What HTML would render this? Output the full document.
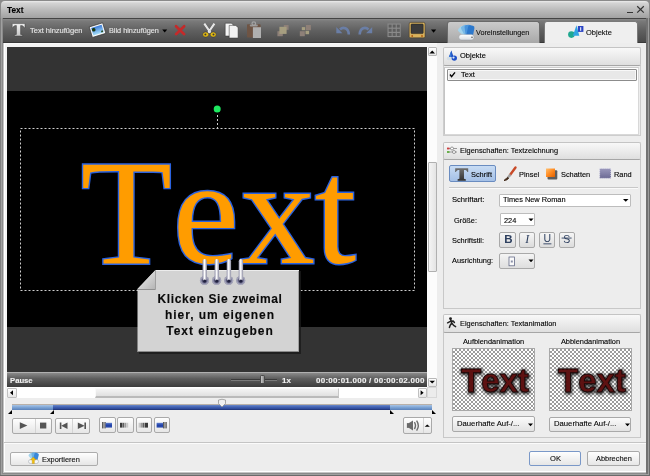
<!DOCTYPE html>
<html><head><meta charset="utf-8">
<style>
*{margin:0;padding:0;box-sizing:border-box}
html,body{width:650px;height:476px;overflow:hidden;background:#6e6e6e}
body{position:relative;font-family:"Liberation Sans",sans-serif;font-size:11px;color:#000}
div,span,svg{position:absolute}
.t{white-space:nowrap;line-height:1;-webkit-text-stroke:0.12px currentColor;will-change:transform}
.ph{background:linear-gradient(#f8f8f8,#dfdfdf);border:1px solid #c4c4c4;border-bottom-color:#a6a6a6;border-radius:2px}
.btn{background:linear-gradient(#fefefe,#e6e6e6);border:1px solid #a9a9a9;border-radius:2px}
.tbl{color:#e6e6e6;font-size:11px}
</style></head><body>
<!-- window frame -->
<div style="left:0;top:0;width:650px;height:476px;background:#8a8a8a"></div>
<div style="left:0;top:18px;width:650px;height:458px;background:#6a6a6a"></div>
<div style="left:0;top:18px;width:1px;height:457px;background:#7e7e7e"></div>
<div style="left:1px;top:18px;width:648px;height:457px;background:#a0a0a0"></div>
<div style="left:2px;top:18px;width:646px;height:456px;background:#8a8a8a"></div>
<div style="left:3px;top:18px;width:643px;height:455px;background:#c4c4c4"></div>
<div style="left:646px;top:18px;width:2px;height:456px;background:#727272"></div>
<div style="left:648px;top:18px;width:1px;height:456px;background:#9c9c9c"></div>
<!-- title bar -->
<div style="left:1px;top:1px;width:648px;height:17px;background:linear-gradient(#ececec,#d4d4d4 2px,#bcbcbc 50%,#a2a2a2);border-radius:4px 4px 0 0"></div>
<div class="t" style="left:7px;top:6px;font-weight:bold;font-size:8.3px">Text</div>
<!-- toolbar -->
<div style="left:3px;top:18px;width:643px;height:25px;background:linear-gradient(#8a8a8a,#7a7a7a 2px,#606060 50%,#4a4a4a);border-top:1px solid #444;border-bottom:1px solid #383838"></div>

<!-- toolbar content -->
<svg style="left:0;top:0" width="650" height="44">
<defs>
<linearGradient id="silv" x1="0" y1="0" x2="0" y2="1"><stop offset="0" stop-color="#f4f4f4"/><stop offset="1" stop-color="#c4c4c4"/></linearGradient>
<linearGradient id="sky" x1="0" y1="0" x2="0" y2="1"><stop offset="0" stop-color="#3a7ad8"/><stop offset="1" stop-color="#a8e0f8"/></linearGradient>
</defs>
<!-- T icon -->
<path d="M12.2,23.6 L25,23.6 L25,27.8 L24,27.8 C23.6,26 22.6,25.6 20.6,25.6 L20.6,34.4 L22.6,34.9 L22.6,36 L14.4,36 L14.4,34.9 L16.4,34.4 L16.4,25.6 C14.4,25.6 13.4,26 13,27.8 L12.2,27.8 Z" fill="url(#silv)" stroke="#3a3a3a" stroke-width="0.5"/>
<!-- photo icon -->
<g transform="rotate(-17 98 30)"><rect x="90.5" y="24.5" width="14" height="11" fill="#fafafa" stroke="#2a2a2a" stroke-width="0.6"/><rect x="92" y="26" width="11" height="8" fill="url(#sky)"/><circle cx="94" cy="28.5" r="1.8" fill="#1a3a10"/><circle cx="101.5" cy="32.5" r="1" fill="#2a4a20"/></g>
<!-- dropdown arrows -->
<path d="M162.2,29.6 L167.2,29.6 L164.7,32.6 Z" fill="#000"/>
<path d="M431,29.6 L436.2,29.6 L433.6,32.8 Z" fill="#000"/>
<!-- red X -->
<path d="M176,26.2 L184.2,34.2 M184.2,26.2 L176,34.2" stroke="#c42a2a" stroke-width="2.6" stroke-linecap="round"/>
<!-- scissors -->
<path d="M204.3,23.6 L210.6,32.8 M214.4,23.6 L208.1,32.8" stroke="#f4f4f4" stroke-width="1.9"/>
<path d="M204.3,23.6 L210.6,32.8 M214.4,23.6 L208.1,32.8" stroke="#909090" stroke-width="0.4" opacity="0.5"/>
<ellipse cx="205.7" cy="34.5" rx="3" ry="2.6" fill="#e4bc10" stroke="#2a2a40" stroke-width="0.5"/>
<ellipse cx="213.2" cy="34.5" rx="3" ry="2.6" fill="#e4bc10" stroke="#2a2a40" stroke-width="0.5"/>
<circle cx="205.4" cy="34.6" r="1" fill="#3a3a40"/><circle cx="213.5" cy="34.6" r="1" fill="#3a3a40"/>
<!-- copy -->
<path d="M225.2,23.2 L231.5,23.2 L233.7,25.4 L233.7,36 L225.2,36 Z" fill="#f6f6f6" stroke="#303030" stroke-width="0.5"/>
<path d="M229.2,25.4 L235.8,25.4 L238.1,27.7 L238.1,38 L229.2,38 Z" fill="#f2f2f2" stroke="#303030" stroke-width="0.5"/>
<!-- paste disabled -->
<rect x="247" y="24.3" width="13.6" height="13.3" rx="0.8" fill="#6e5444"/>
<rect x="249.8" y="24.6" width="8" height="2" rx="0.8" fill="#9a9a9a"/><circle cx="253.8" cy="23.6" r="1.8" fill="none" stroke="#a4a4a4" stroke-width="1.2"/>
<rect x="252.9" y="27.2" width="8.1" height="10.8" fill="#b0b0b0"/>
<!-- group -->
<rect x="283.8" y="25" width="4.8" height="4.8" fill="#8e8078"/>
<rect x="277.4" y="31.2" width="5.4" height="5" fill="#8e8078"/>
<rect x="279.4" y="26.8" width="7.2" height="7.1" fill="#a69e80"/>
<!-- ungroup -->
<rect x="305.9" y="25" width="5" height="5.2" fill="#8e8078"/>
<rect x="301.8" y="27.1" width="3.4" height="3.1" fill="#a69e80"/>
<rect x="299.8" y="31.2" width="5" height="5" fill="#8e8078"/>
<rect x="305.5" y="30.8" width="3.6" height="3.4" fill="#a69e80"/>
<!-- undo -->
<path d="M340,29.5 C343,26.5 348.5,27.5 348.8,34.5" fill="none" stroke="#6a7ea6" stroke-width="2.6"/>
<path d="M336.3,27 L336.3,33.3 L342.4,33.3 Z" fill="#6a7ea6"/>
<!-- redo -->
<path d="M368.5,29.5 C365.5,26.5 360,27.5 359.7,34.5" fill="none" stroke="#6a7ea6" stroke-width="2.6"/>
<path d="M372.2,27 L372.2,33.3 L366.1,33.3 Z" fill="#6a7ea6"/>
<!-- grid -->
<rect x="387.5" y="23.5" width="13.2" height="13.6" fill="#8a8a8a"/>
<g fill="#5e5e5e"><rect x="388.6" y="24.6" width="3" height="3"/><rect x="392.7" y="24.6" width="3" height="3"/><rect x="396.8" y="24.6" width="3" height="3"/>
<rect x="388.6" y="28.8" width="3" height="3"/><rect x="392.7" y="28.8" width="3" height="3"/><rect x="396.8" y="28.8" width="3" height="3"/>
<rect x="388.6" y="33" width="3" height="3"/><rect x="392.7" y="33" width="3" height="3"/><rect x="396.8" y="33" width="3" height="3"/></g>
<!-- TV -->
<rect x="409.2" y="22.4" width="15.8" height="15.4" rx="1.5" fill="#d9b25c" stroke="#3a3020" stroke-width="0.5"/>
<rect x="411" y="24" width="12.2" height="9.6" rx="0.8" fill="#3a3a3a" stroke="#1c1c1c" stroke-width="0.5"/>
<circle cx="412.2" cy="36" r="0.9" fill="#b05a10"/><circle cx="422" cy="36" r="0.9" fill="#b05a10"/>
</svg>
<div class="t tbl" style="left:30px;top:27px;font-size:7.5px">Text hinzufügen</div>
<div class="t tbl" style="left:108.5px;top:27px;font-size:7.3px">Bild hinzufügen</div>

<!-- title buttons -->
<div style="left:626.5px;top:11.5px;width:6.5px;height:1.5px;background:#333"></div>
<svg style="left:636px;top:5px" width="10" height="10"><path d="M1.2,1.2 L7.8,7.6 M7.8,1.2 L1.2,7.6" stroke="#333" stroke-width="1.2"/></svg>
<!-- tabs -->
<div style="left:447px;top:20.5px;width:93px;height:22px;background:linear-gradient(#cbcbcb,#a8a8a8);border:1px solid #6a6a6a;border-bottom:none;border-radius:3px 3px 0 0"></div>
<div style="left:544px;top:20.5px;width:93.5px;height:23.5px;background:#efefef;border:1px solid #7a7a7a;border-bottom:none;border-radius:3px 3px 0 0"></div>
<svg style="left:0;top:0" width="650" height="44">
<defs>
<linearGradient id="pill" x1="0" y1="0" x2="0" y2="1"><stop offset="0" stop-color="#ffffff"/><stop offset="1" stop-color="#d8dde2"/></linearGradient>
</defs>
<g transform="translate(467.5,37.5)">
<rect x="-1.5" y="-12.5" width="6.5" height="12.5" rx="2" fill="#a4d4ec" transform="rotate(-48)"/>
<rect x="-1.5" y="-12.5" width="6.5" height="12.5" rx="2" fill="#78b8e6" transform="rotate(-28)"/>
<rect x="-1.5" y="-12.5" width="6.5" height="12.5" rx="2" fill="#4a94dc" transform="rotate(-8)"/>
<rect x="-1.5" y="-12.5" width="6.5" height="12.5" rx="2" fill="#2c78cc" transform="rotate(11)"/>
</g>
<rect x="458.8" y="34.4" width="15.2" height="5.6" rx="2.8" fill="url(#pill)" stroke="#8a9098" stroke-width="0.4"/>
<circle cx="472" cy="37.2" r="0.8" fill="#555"/>
<circle cx="571.4" cy="34.6" r="3.3" fill="#20a890"/>
<path d="M576.5,25.3 L579.3,35.7 L572.8,35.7 Z" fill="#30a4e2"/>
<rect x="577.9" y="26" width="5.5" height="5.9" fill="#2a44c4"/>
<rect x="580.2" y="27.2" width="1" height="3.6" fill="#fff"/>
</svg>
<div class="t" style="left:476px;top:29px;font-size:7.2px;color:#101010">Voreinstellungen</div>
<div class="t" style="left:586px;top:29px;font-size:7.5px;color:#101010">Objekte</div>
<!-- main light area -->
<div style="left:4px;top:43px;width:642px;height:429px;background:#ededed;border-left:1px solid #fff;border-bottom:1px solid #fff"></div>

<!-- preview white frame -->
<div style="left:4px;top:43px;width:433px;height:355px;background:#f4f4f4;border-left:1px solid #fff;border-top:1px solid #fafafa"></div>
<div style="left:7px;top:47px;width:420px;height:325px;background:#333"></div>
<div style="left:7px;top:91px;width:420px;height:236px;background:#000"></div>


<!-- preview content -->
<svg style="left:0;top:0" width="650" height="476">
<rect x="20.5" y="128.5" width="394" height="162" fill="none" stroke="#cfcfcf" stroke-width="1" stroke-dasharray="2 2"/>
<line x1="217.5" y1="115" x2="217.5" y2="128" stroke="#cfcfcf" stroke-dasharray="2 2"/>
<circle cx="217.2" cy="109.1" r="3.5" fill="#1ee860"/>
<text y="262.5" style="font-kerning:none" font-family="Liberation Serif" font-size="150" fill="#ff9c00" stroke="#2a62e0" stroke-width="2.8" paint-order="stroke"><tspan x="80.5">T</tspan><tspan x="172.5">e</tspan><tspan x="240">x</tspan><tspan x="314.5">t</tspan></text>
</svg>

<!-- note -->
<svg style="left:0;top:0" width="650" height="476">
<defs>
<linearGradient id="ring" x1="0" y1="0" x2="0" y2="1"><stop offset="0" stop-color="#c8c8d8"/><stop offset="0.3" stop-color="#ffffff"/><stop offset="1" stop-color="#8a8aa8"/></linearGradient>
<linearGradient id="fold" x1="0" y1="0" x2="1" y2="1"><stop offset="0" stop-color="#f4f4f4"/><stop offset="1" stop-color="#b4b4b4"/></linearGradient>
<radialGradient id="hole"><stop offset="0" stop-color="#262644"/><stop offset="0.35" stop-color="#3a3a5c"/><stop offset="0.6" stop-color="#7a7a98"/><stop offset="0.85" stop-color="#a8a8be"/><stop offset="1" stop-color="#8a8aa2"/></radialGradient>
<linearGradient id="ringh" x1="0" y1="0" x2="1" y2="0"><stop offset="0" stop-color="#9090a8"/><stop offset="0.45" stop-color="#ffffff"/><stop offset="1" stop-color="#8a8aa0"/></linearGradient>
</defs>
<polygon points="156,271 301,271 301,354 139,354 139,290" fill="#1a1a1a" opacity="0.8"/>
<polygon points="155.5,270 299,270 299,352 137.5,352 137.5,289" fill="#d3d3d3"/>
<line x1="156" y1="270.5" x2="299" y2="270.5" stroke="#ececec"/>
<line x1="298.5" y1="271" x2="298.5" y2="352" stroke="#a0a0a0"/>
<line x1="138" y1="351.5" x2="299" y2="351.5" stroke="#8a8a8a"/>
<polygon points="155.5,270 155.5,289 137.5,289" fill="url(#fold)"/>
<line x1="137.5" y1="289.5" x2="155.5" y2="289.5" stroke="#909090"/>
<line x1="155.5" y1="270" x2="155.5" y2="289.5" stroke="#a0a0a0"/>
<g>
<circle cx="204.5" cy="280.5" r="4.6" fill="url(#hole)"/><rect x="202.5" y="259" width="4.4" height="22" rx="2.2" fill="url(#ringh)"/>
<circle cx="216.6" cy="280.5" r="4.6" fill="url(#hole)"/><rect x="214.6" y="259" width="4.4" height="22" rx="2.2" fill="url(#ringh)"/>
<circle cx="228.7" cy="280.5" r="4.6" fill="url(#hole)"/><rect x="226.7" y="259" width="4.4" height="22" rx="2.2" fill="url(#ringh)"/>
<circle cx="240.7" cy="280.5" r="4.6" fill="url(#hole)"/><rect x="238.7" y="259" width="4.4" height="22" rx="2.2" fill="url(#ringh)"/>
</g>
<g fill="#222240"><circle cx="204.7" cy="281" r="1.5"/><circle cx="216.8" cy="281" r="1.5"/><circle cx="228.9" cy="281" r="1.5"/><circle cx="240.9" cy="281" r="1.5"/></g>
</svg>
<div class="t" style="left:138.5px;top:291px;width:162px;text-align:center;font-weight:bold;font-size:12px;line-height:16px;color:#0a0a0a"><span style="position:static;letter-spacing:0.6px">Klicken Sie zweimal</span><br><span style="position:static;letter-spacing:0.95px">hier, um eigenen</span><br><span style="position:static;letter-spacing:0.95px">Text einzugeben</span></div>
<!-- vertical scrollbar -->
<div style="left:427px;top:47px;width:10px;height:340px;background:#fcfcfc"></div>
<div class="btn" style="left:427.5px;top:47px;width:9px;height:9px;border-radius:1px;border-color:#b8b8b8"></div>
<svg style="left:428px;top:48px" width="9" height="8"><path d="M1.4,5.4 L7,5.4 L4.2,2.6 Z" fill="#000"/></svg>
<div class="btn" style="left:427.5px;top:162px;width:9px;height:110px;border-radius:1px;border-color:#b0b0b0;background:linear-gradient(90deg,#f4f4f4,#e4e4e4)"></div>
<div class="btn" style="left:427.5px;top:377.5px;width:9px;height:9px;border-radius:1px;border-color:#b8b8b8"></div>
<svg style="left:428px;top:378px" width="9" height="8"><path d="M1.4,2.8 L7,2.8 L4.2,5.6 Z" fill="#000"/></svg>

<!-- pause bar -->
<div style="left:7px;top:372px;width:420px;height:15px;background:linear-gradient(#8a8a8a,#5e5e5e 40%,#3c3c3c);border-top:1px solid #b0b0b0"></div>
<div class="t" style="left:10px;top:377px;color:#f2f2f2;font-weight:bold;font-size:7.7px">Pause</div>
<div style="left:231px;top:379px;width:46px;height:2px;background:#3a3a3a;border-bottom:1px solid #7a7a7a"></div>
<div style="left:259.8px;top:375.4px;width:4.8px;height:9px;background:linear-gradient(90deg,#c8c8c8,#8a8a8a);border:1px solid #4a4a4a;border-radius:1.5px"></div>
<div class="t" style="left:281.8px;top:376.5px;color:#f2f2f2;font-weight:bold;font-size:8px">1x</div>
<div class="t" style="left:315.5px;top:376.5px;color:#f2f2f2;font-weight:bold;font-size:8px;letter-spacing:0.25px">00:00:01.000 / 00:00:02.000</div>

<!-- h scrollbar -->
<div style="left:7px;top:387px;width:420px;height:11px;background:#fff"></div>
<div class="btn" style="left:7px;top:388px;width:9.5px;height:9.5px;border-radius:1px;border-color:#c0c0c0"></div>
<svg style="left:7px;top:388px" width="10" height="10"><path d="M3,4.8 L6,2.3 L6,7.3 Z" fill="#000"/></svg>
<div style="left:94.5px;top:388px;width:244.5px;height:10px;background:linear-gradient(#f4f4f4,#e0e0e0);border:1px solid #fafafa;border-bottom:2px solid #bababa;border-right-color:#c8c8c8"></div>
<div class="btn" style="left:417.5px;top:388px;width:9.5px;height:9.5px;border-radius:1px;border-color:#c0c0c0"></div>
<svg style="left:417px;top:388px" width="10" height="10"><path d="M6.6,4.8 L3.6,2.3 L3.6,7.3 Z" fill="#000"/></svg>
<div style="left:427px;top:387px;width:10px;height:11px;background:#ececec;border:1px solid #d8d8d8"></div>
<!-- timeline -->
<div style="left:11.5px;top:403.5px;width:420px;height:6.5px;background:linear-gradient(#6a88c8,#4262b4 40%,#2c4896 80%,#1c2c68);border-top:1px solid #b8b0a8"></div>
<div style="left:11.5px;top:404.5px;width:41.5px;height:5.5px;background:linear-gradient(#a8c4e4,#7aa2d4 50%,#5a80b8)"></div>
<div style="left:390px;top:404.5px;width:41.5px;height:5.5px;background:linear-gradient(#a8c4e4,#7aa2d4 50%,#5a80b8)"></div>
<svg style="left:0;top:396px" width="450" height="22">
<path d="M8,18 L12,14 L12,18 Z M50,18 L54,14 L54,18 Z M390,14 L394,18 L390,18 Z M432,14 L436,18 L432,18 Z" fill="#000"/>
<path d="M218.5,4 Q222,2.5 225.5,4 L225.5,7.5 L222,11 L218.5,7.5 Z" fill="#f0f0f0" stroke="#8a8a8a" stroke-width="0.7"/>
</svg>

<!-- separator -->
<div style="left:4px;top:442px;width:642px;height:1px;background:#c4c4c4"></div>
<div style="left:4px;top:443px;width:642px;height:1px;background:#fbfbfb"></div>

<!-- right panels -->
<div style="left:443px;top:65px;width:198px;height:71px;background:#ededed;border:1px solid #cdcdcd;border-top:none"></div>
<div class="ph" style="left:443px;top:47px;width:198px;height:19px"></div>
<div style="left:444px;top:67px;width:194.5px;height:67.5px;background:#fff;border:1px solid #d8d8d8;border-left-color:#c4c4c4;border-top-color:#cccccc"></div>
<div style="left:446.5px;top:69.3px;width:190.5px;height:11.5px;background:#e8e8e8;border:1px solid #8c8c8c;border-radius:1px;box-shadow:inset 0 0 0 1px #f8f8f8"></div>
<svg style="left:446px;top:69px" width="12" height="12"><path d="M4,5.5 L5.6,7.6 L9,3.4" fill="none" stroke="#000" stroke-width="1.4"/></svg>
<div class="t" style="left:461px;top:70.5px;font-size:7.5px">Text</div>
<svg style="left:443px;top:47px" width="20" height="19">
<path d="M8.4,3.6 L10.6,10.2 L5.8,10.2 Z" fill="#1a4cc0"/>
<path d="M8.4,3.6 L8.4,10.2 L5.8,10.2 Z" fill="#3a7ad8"/>
<rect x="3.8" y="10" width="5.6" height="3.2" rx="1.4" fill="#d4dee6"/>
<circle cx="11.3" cy="11.1" r="2.7" fill="#1e50c8"/>
<circle cx="10.5" cy="10.6" r="1.1" fill="#d8e8f8"/>
</svg>
<div class="t" style="left:460px;top:52px;font-size:7.5px">Objekte</div>

<div style="left:443px;top:159px;width:198px;height:150px;border:1px solid #c8c8c8;border-top:none"></div>
<div class="ph" style="left:443px;top:141.5px;width:198px;height:18px"></div>
<svg style="left:443px;top:141px" width="20" height="19">
<path d="M4,7.5 H14 M4,11 H14" stroke="#9a9a9a" stroke-width="1"/>
<rect x="4" y="6.6" width="2.5" height="1.8" fill="#d04040"/><rect x="4" y="10.1" width="2.5" height="1.8" fill="#60b040"/>
<circle cx="9" cy="7.5" r="1.5" fill="#fff" stroke="#606060" stroke-width="0.6"/><circle cx="11" cy="11" r="1.5" fill="#fff" stroke="#606060" stroke-width="0.6"/>
</svg>
<div class="t" style="left:460px;top:146.5px;font-size:7.4px">Eigenschaften: Textzeichnung</div>
<!-- tools -->
<div style="left:449px;top:165.4px;width:47px;height:17px;background:linear-gradient(#c8dcf4,#a4c0e6);border:1px solid #6a8cc0;border-radius:2px"></div>
<svg style="left:440px;top:160px" width="200" height="28">
<defs><linearGradient id="tgr" x1="0" y1="0" x2="0" y2="1"><stop offset="0" stop-color="#707070"/><stop offset="1" stop-color="#303030"/></linearGradient>
<linearGradient id="org" x1="0" y1="0" x2="1" y2="1"><stop offset="0" stop-color="#ffc070"/><stop offset="0.5" stop-color="#ff8a20"/><stop offset="1" stop-color="#e06000"/></linearGradient></defs>
<path d="M15.2,8.2 L28.2,8.2 L28.2,12 L27.4,12 C27,10.4 26,10 24,10 L24,18.8 L25.8,19.3 L25.8,20.8 L17.6,20.8 L17.6,19.3 L19.4,18.8 L19.4,10 C17.4,10 16.4,10.4 16,12 L15.2,12 Z" fill="url(#tgr)"/>
<path d="M75.5,7.5 L70,15" stroke="#c84a28" stroke-width="2.4" stroke-linecap="round"/>
<path d="M70.5,14.5 L67.5,18" stroke="#a0a0a0" stroke-width="2.2"/>
<path d="M68,17.5 C66,18.5 65,19.5 64,20.5 C66,20.5 67.5,19.5 68.5,18.5 Z" fill="#402818" stroke="#402818" stroke-width="1"/>
<rect x="107.5" y="10.2" width="9.8" height="9.4" rx="1" fill="#202020" opacity="0.7"/>
<rect x="106" y="8.5" width="9" height="8.5" fill="url(#org)"/>
<defs><linearGradient id="rnd" x1="0" y1="0" x2="0" y2="1"><stop offset="0" stop-color="#9a98bc"/><stop offset="1" stop-color="#6c6a94"/></linearGradient></defs><rect x="159.6" y="8.4" width="11.4" height="10" fill="url(#rnd)" stroke="#e8e8f0" stroke-width="1" stroke-dasharray="1 1"/>
</svg>
<div class="t" style="left:471px;top:171px;font-size:7.4px">Schrift</div>
<div class="t" style="left:519px;top:171px;font-size:7.4px">Pinsel</div>
<div class="t" style="left:561px;top:171px;font-size:7.4px">Schatten</div>
<div class="t" style="left:614px;top:171px;font-size:7.4px">Rand</div>
<div style="left:449px;top:186.5px;width:189px;height:1px;background:#c8c8c8"></div>
<div style="left:449px;top:187.5px;width:189px;height:1px;background:#fafafa"></div>
<!-- form -->
<div class="t" style="left:452.3px;top:196px;font-size:7.6px">Schriftart:</div>
<div class="t" style="left:454px;top:216.5px;font-size:7.4px">Größe:</div>
<div class="t" style="left:452.3px;top:236.5px;font-size:7.4px">Schriftstil:</div>
<div class="t" style="left:452.3px;top:256.5px;font-size:7.4px">Ausrichtung:</div>
<div style="left:499.2px;top:193.5px;width:132px;height:13px;background:#fff;border:1px solid #bdbdbd;border-radius:1px"></div>
<div class="t" style="left:502.5px;top:196px;font-size:7.4px">Times New Roman</div>
<div style="left:500px;top:213px;width:34.5px;height:13px;background:#fff;border:1px solid #bdbdbd;border-radius:1px"></div>
<div class="t" style="left:503.5px;top:217px;font-size:7.4px">224</div>
<div class="btn" style="left:499px;top:232px;width:16.6px;height:15.5px;background:linear-gradient(#f6f6f6,#dcdcdc)"></div>
<div class="btn" style="left:519.4px;top:232px;width:16.1px;height:15.5px;background:linear-gradient(#f6f6f6,#dcdcdc)"></div>
<div class="btn" style="left:539px;top:232px;width:16px;height:15.5px;background:linear-gradient(#f6f6f6,#dcdcdc)"></div>
<div class="btn" style="left:558.7px;top:232px;width:16.1px;height:15.5px;background:linear-gradient(#f6f6f6,#dcdcdc)"></div>
<div class="btn" style="left:499px;top:253.4px;width:35.5px;height:15.6px;background:linear-gradient(#f4f4f4,#dedede)"></div>
<svg style="left:440px;top:185px" width="200" height="90">
<path d="M183,14 L188.5,14 L185.75,16.8 Z M88.5,33.6 L93.5,33.6 L91,36.2 Z M88.5,74.6 L93.5,74.6 L91,77.2 Z" fill="#000"/>
<text x="64.2" y="58.2" font-family="Liberation Sans" font-weight="bold" font-size="11.5" fill="#2e4060">B</text>
<text x="85.2" y="58.2" font-family="Liberation Serif" font-style="italic" font-size="12" fill="#2e4060">I</text>
<text x="103.6" y="57" font-family="Liberation Sans" font-size="10.5" fill="#2e4060">U</text>
<rect x="103.4" y="58.4" width="8" height="0.9" fill="#2e4060"/>
<text x="123.3" y="57.5" font-family="Liberation Sans" font-size="10.5" fill="#2e4060">S</text>
<rect x="121.6" y="52.6" width="10" height="0.9" fill="#2e4060"/>
<rect x="69" y="72" width="5.5" height="8.8" fill="#fafafa" stroke="#505878" stroke-width="0.7"/>
<rect x="70.8" y="75.5" width="2" height="2" fill="#8a90a8"/>
</svg>

<div style="left:443px;top:331px;width:198px;height:107px;border:1px solid #c8c8c8;border-top:none"></div>
<div class="ph" style="left:443px;top:313.8px;width:198px;height:19px"></div>
<svg style="left:443px;top:313px" width="20" height="19">
<circle cx="7.5" cy="5.6" r="1.4" fill="#222"/>
<path d="M7.6,6.5 L8.8,10 M4.6,9.8 L7.8,8.2 L10.2,8 L11.4,9.4 M8.8,10 L7.2,12.2 L6.4,14.4 M8.8,10 L10.6,12.4 L12.6,13.6" stroke="#222" stroke-width="1.5" fill="none" stroke-linecap="round" stroke-linejoin="round"/>
</svg>
<div class="t" style="left:460px;top:319.5px;font-size:7.4px">Eigenschaften: Textanimation</div>
<div class="t" style="left:452px;top:338px;width:83px;text-align:center;font-size:7.4px">Aufblendanimation</div>
<div class="t" style="left:549px;top:338px;width:83px;text-align:center;font-size:7.4px">Abblendanimation</div>
<div style="left:452.2px;top:348.2px;width:83.2px;height:63.2px;border:1px solid #a8a8a8;background-color:#fff;background-image:linear-gradient(45deg,#9c9c9c 25%,transparent 25%,transparent 75%,#9c9c9c 75%),linear-gradient(45deg,#9c9c9c 25%,transparent 25%,transparent 75%,#9c9c9c 75%);background-size:4px 4px;background-position:0 0,2px 2px"></div>
<div style="left:549px;top:348.2px;width:83.2px;height:63.2px;border:1px solid #a8a8a8;background-color:#fff;background-image:linear-gradient(45deg,#9c9c9c 25%,transparent 25%,transparent 75%,#9c9c9c 75%),linear-gradient(45deg,#9c9c9c 25%,transparent 25%,transparent 75%,#9c9c9c 75%);background-size:4px 4px;background-position:0 0,2px 2px"></div>
<svg style="left:440px;top:340px" width="200" height="70">
<defs><filter id="blur1" x="-20%" y="-20%" width="140%" height="140%"><feGaussianBlur stdDeviation="1.8"/></filter></defs>
<text x="21.5" y="53.2" font-family="Liberation Sans" font-weight="bold" font-size="33" fill="#000" stroke="#000" stroke-width="2.5" opacity="0.8" filter="url(#blur1)" style="font-kerning:none">Text</text>
<text x="21" y="52.4" font-family="Liberation Sans" font-weight="bold" font-size="33" fill="#5e1212" stroke="#1a0808" stroke-width="0.9" style="font-kerning:none">Text</text>
<text x="118.5" y="53.2" font-family="Liberation Sans" font-weight="bold" font-size="33" fill="#000" stroke="#000" stroke-width="2.5" opacity="0.8" filter="url(#blur1)" style="font-kerning:none">Text</text>
<text x="118" y="52.4" font-family="Liberation Sans" font-weight="bold" font-size="33" fill="#5e1212" stroke="#1a0808" stroke-width="0.9" style="font-kerning:none">Text</text>
</svg>
<div class="btn" style="left:452px;top:416px;width:83px;height:16px;background:linear-gradient(#fbfbfb,#e2e2e2)"></div>
<div class="btn" style="left:549.4px;top:417px;width:82px;height:15px;background:linear-gradient(#fbfbfb,#e2e2e2)"></div>
<div class="t" style="left:456.5px;top:420px;font-size:7.7px;-webkit-text-stroke:0.1px #000">Dauerhafte Auf-/...</div>
<div class="t" style="left:553.5px;top:420px;font-size:7.7px;-webkit-text-stroke:0.1px #000">Dauerhafte Auf-/...</div>
<svg style="left:440px;top:410px" width="200" height="30"><path d="M88,13.6 L93,13.6 L90.5,16.2 Z M185,13.6 L190,13.6 L187.5,16.2 Z" fill="#000"/></svg>

<!-- bottom buttons -->
<div class="btn" style="left:10px;top:451.5px;width:88px;height:14.5px;border-color:#acacac"></div>
<div class="btn" style="left:528.5px;top:451px;width:52px;height:15px;border-color:#7a98c8"></div>
<div class="btn" style="left:587px;top:451px;width:53px;height:15px"></div>
<svg style="left:0;top:440px" width="100" height="30">
<g transform="translate(34,20.5)">
<rect x="-1.2" y="-8" width="4.5" height="8" rx="1.5" fill="#a4d4ec" transform="rotate(-40)"/>
<rect x="-1.2" y="-8" width="4.5" height="8" rx="1.5" fill="#6ab0e4" transform="rotate(-12)"/>
<rect x="-1.2" y="-8" width="4.5" height="8" rx="1.5" fill="#3a88d8" transform="rotate(14)"/>
</g>
<rect x="28.5" y="19.5" width="10" height="4" rx="2" fill="#f4f6f8" stroke="#8a9098" stroke-width="0.4"/>
<path d="M33.3,17 L36.2,20 L34.4,20 L34.4,23.5 L32.2,23.5 L32.2,20 L30.4,20 Z" fill="#f2c010" stroke="#b08000" stroke-width="0.3"/>
</svg>
<div class="t" style="left:41.5px;top:455.5px;font-size:7.4px;color:#111">Exportieren</div>
<div class="t" style="left:550px;top:454.8px;font-size:7.6px;color:#111">OK</div>
<div class="t" style="left:596px;top:454.8px;font-size:7.4px;color:#111">Abbrechen</div>
<!-- control buttons -->
<div class="btn" style="left:11.5px;top:417.5px;width:40.5px;height:16.5px"></div>
<div style="left:34.5px;top:418.5px;width:1px;height:14.5px;background:#d4d4d4"></div>
<div class="btn" style="left:55px;top:417.5px;width:34.7px;height:16.5px"></div>
<div style="left:72px;top:418.5px;width:1px;height:14.5px;background:#d4d4d4"></div>
<div class="btn" style="left:99px;top:417.4px;width:16.6px;height:16px"></div>
<div class="btn" style="left:117.4px;top:417.4px;width:16.2px;height:16px"></div>
<div class="btn" style="left:135.6px;top:417.4px;width:16.2px;height:16px"></div>
<div class="btn" style="left:153.6px;top:417.4px;width:16.2px;height:16px"></div>
<div class="btn" style="left:403.3px;top:417.3px;width:28.3px;height:16.4px"></div>
<div style="left:422.5px;top:418.3px;width:1px;height:14.4px;background:#d4d4d4"></div>
<svg style="left:0;top:410px" width="450" height="30">
<defs><linearGradient id="gbar" x1="0" y1="0" x2="1" y2="0"><stop offset="0" stop-color="#404040"/><stop offset="0.5" stop-color="#b0b0b0"/><stop offset="1" stop-color="#505050"/></linearGradient>
<linearGradient id="bbar" x1="0" y1="0" x2="0" y2="1"><stop offset="0" stop-color="#6080d0"/><stop offset="0.5" stop-color="#2040a8"/><stop offset="1" stop-color="#3050b0"/></linearGradient></defs>
<path d="M19.8,12.2 L27.4,15.6 L19.8,19.1 Z" fill="#555"/>
<rect x="40" y="12.6" width="6.3" height="5.9" fill="#555"/>
<rect x="59.8" y="12.5" width="1.6" height="6.5" fill="#555"/><path d="M67.5,12.5 L61.2,15.75 L67.5,19 Z" fill="#555"/>
<rect x="84.4" y="12.5" width="1.6" height="6.5" fill="#555"/><path d="M77.8,12.5 L84.6,15.75 L77.8,19 Z" fill="#555"/>
<rect x="102" y="12" width="3.8" height="6.4" fill="url(#gbar)"/><rect x="105.6" y="12.8" width="6.4" height="4.8" fill="url(#bbar)"/>
<rect x="120" y="12.8" width="2.2" height="4.8" fill="#3a3a3a"/><rect x="122.4" y="12.8" width="2" height="4.8" fill="#606060"/><rect x="124.8" y="12.8" width="1.6" height="4.8" fill="#9a9a9a"/><rect x="126.8" y="12.8" width="1.4" height="4.8" fill="#c8c8c8"/>
<rect x="138.6" y="12.8" width="1.4" height="4.8" fill="#c8c8c8"/><rect x="140.4" y="12.8" width="1.6" height="4.8" fill="#9a9a9a"/><rect x="142.4" y="12.8" width="2" height="4.8" fill="#606060"/><rect x="144.8" y="12.8" width="3.2" height="4.8" fill="#3a3a3a"/>
<rect x="156.6" y="12.8" width="6.6" height="4.8" fill="url(#bbar)"/><rect x="163" y="12" width="3.8" height="6.4" fill="url(#gbar)"/>
<rect x="406.9" y="13.1" width="2.2" height="4.8" fill="#6a6a6a"/><path d="M409,13.1 L413,10.6 L413,20.6 L409,17.9 Z" fill="#6a6a6a"/>
<path d="M414.4,12.2 Q416.6,15.6 414.4,19 M416.6,10.6 Q420,15.6 416.6,20.6" fill="none" stroke="#6a6a6a" stroke-width="1.4"/>
<path d="M424.7,16.7 L429.9,16.7 L427.3,14.5 Z" fill="#000"/>
</svg>
</body></html>
